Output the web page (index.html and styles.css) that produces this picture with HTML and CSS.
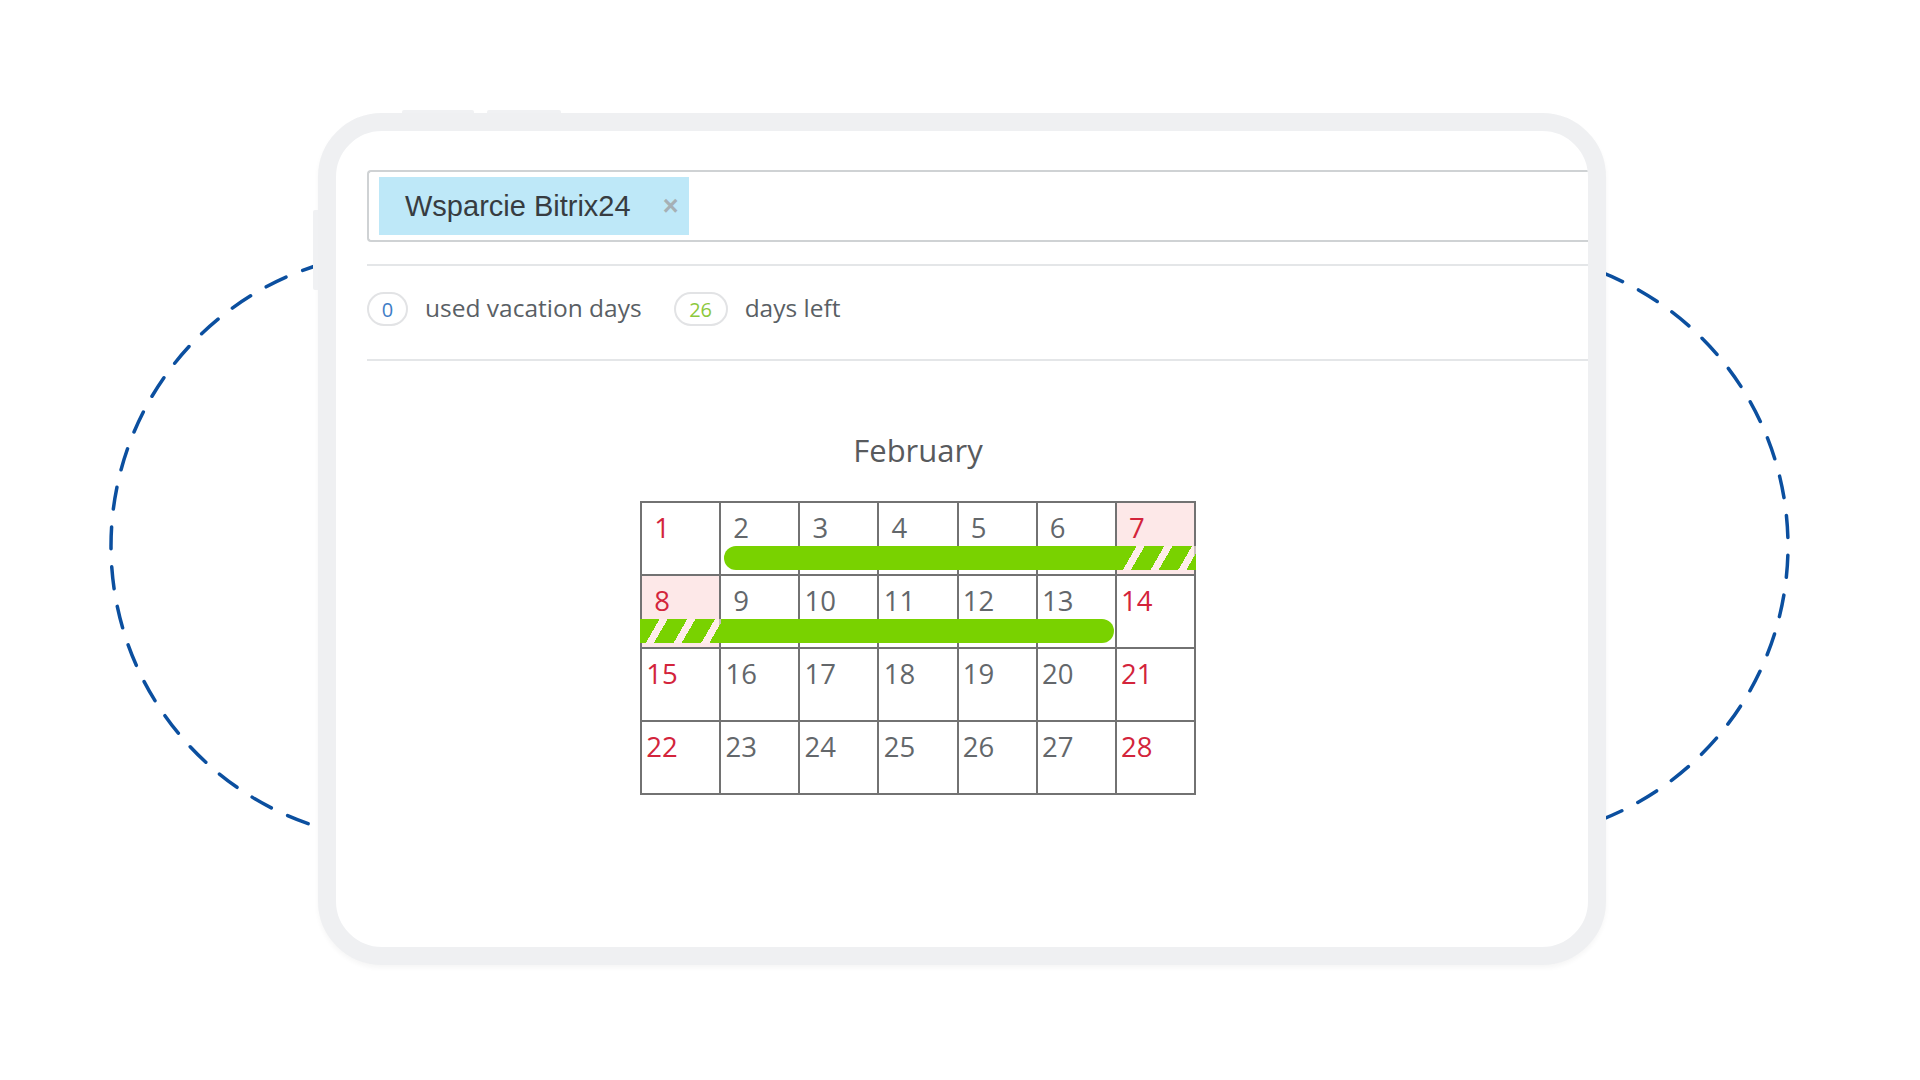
FILE: index.html
```html
<!DOCTYPE html>
<html lang="en">
<head>
<meta charset="utf-8">
<title>Vacation calendar</title>
<link rel="stylesheet" href="styles.css">
</head>
<body>
<div class="stage">
  <svg class="orbit" width="1920" height="1080" viewBox="0 0 1920 1080" aria-hidden="true">
    <rect x="111" y="252" width="1677" height="588" rx="294" ry="294" fill="none" stroke="#0b4f9f" stroke-width="3.5" stroke-linecap="round" stroke-dasharray="22 18"/>
  </svg>
  <div class="device">
    <span class="hw hw-side"></span>
    <span class="hw hw-top1"></span>
    <span class="hw hw-top2"></span>
    <div class="screen">
      <div class="field">
        <span class="tag">Wsparcie Bitrix24<span class="tag-x">×</span></span>
      </div>
      <div class="sep"></div>
      <div class="stats">
        <span class="pill pill-blue">0</span>
        <span class="stat-label">used vacation days</span>
        <span class="pill pill-green">26</span>
        <span class="stat-label">days left</span>
      </div>
      <div class="sep sep-2"></div>
      <div class="calendar">
        <div class="month">February</div>
        <div class="grid-wrap">
          <div class="grid">
            <div class="cell we"><span class="num">1</span></div>
            <div class="cell"><span class="num">2</span></div>
            <div class="cell"><span class="num">3</span></div>
            <div class="cell"><span class="num">4</span></div>
            <div class="cell"><span class="num">5</span></div>
            <div class="cell"><span class="num">6</span></div>
            <div class="cell we off"><span class="num">7</span></div>
            <div class="cell we off"><span class="num">8</span></div>
            <div class="cell"><span class="num">9</span></div>
            <div class="cell"><span class="num">10</span></div>
            <div class="cell"><span class="num">11</span></div>
            <div class="cell"><span class="num">12</span></div>
            <div class="cell"><span class="num">13</span></div>
            <div class="cell we"><span class="num">14</span></div>
            <div class="cell we"><span class="num">15</span></div>
            <div class="cell"><span class="num">16</span></div>
            <div class="cell"><span class="num">17</span></div>
            <div class="cell"><span class="num">18</span></div>
            <div class="cell"><span class="num">19</span></div>
            <div class="cell"><span class="num">20</span></div>
            <div class="cell we"><span class="num">21</span></div>
            <div class="cell we"><span class="num">22</span></div>
            <div class="cell"><span class="num">23</span></div>
            <div class="cell"><span class="num">24</span></div>
            <div class="cell"><span class="num">25</span></div>
            <div class="cell"><span class="num">26</span></div>
            <div class="cell"><span class="num">27</span></div>
            <div class="cell we"><span class="num">28</span></div>
          </div>
          <div class="bar bar-1"></div>
          <div class="hatch hatch-1"></div>
          <div class="hatch hatch-2"></div>
          <div class="bar bar-2"></div>
        </div>
      </div>
    </div>
  </div>
</div>
</body>
</html>
```

FILE: styles.css
```css
* { box-sizing: border-box; }

html, body {
  margin: 0;
  padding: 0;
  background: #ffffff;
}

.stage {
  position: relative;
  width: 1920px;
  height: 1080px;
  padding: 113px 0 0 318px;
  overflow: hidden;
  font-family: "Open Sans", "Liberation Sans", sans-serif;
}

.orbit {
  position: absolute;
  left: 0;
  top: 0;
}

.device {
  position: relative;
  width: 1288px;
  height: 852px;
  border: 18px solid #eff0f2;
  border-radius: 64px;
  background: #ffffff;
  box-shadow: 0 3px 5px rgba(0, 0, 0, 0.04);
}

.hw {
  position: absolute;
  background: #f0f1f3;
}

.hw-side {
  left: -23px;
  top: 79px;
  width: 5px;
  height: 80px;
  border-radius: 2px 0 0 2px;
}

.hw-top1 {
  top: -21px;
  left: 66px;
  width: 72px;
  height: 3px;
  border-radius: 2px 2px 0 0;
}

.hw-top2 {
  top: -21px;
  left: 151px;
  width: 74px;
  height: 3px;
  border-radius: 2px 2px 0 0;
}

.screen {
  height: 100%;
  border-radius: 46px;
  overflow: hidden;
  padding: 39px 0 0 31px;
}

.field {
  height: 72px;
  border: 2px solid #cfd2d4;
  border-right: none;
  border-radius: 4px 0 0 4px;
  padding: 5px 0 5px 10px;
  display: flex;
  align-items: stretch;
}

.tag {
  display: inline-flex;
  align-items: center;
  padding: 0 11px 0 26px;
  background: #bee8f8;
  font-family: "Liberation Sans", Arial, sans-serif;
  font-size: 29px;
  color: #373c41;
}

.tag-x {
  margin-left: 32px;
  font-size: 27px;
  font-weight: bold;
  color: #a6b0b5;
  line-height: 1;
}

.sep {
  height: 2px;
  background: #e4e6e8;
  margin-top: 22px;
}

.sep-2 {
  margin-top: 33px;
}

.stats {
  display: flex;
  align-items: center;
  height: 34px;
  margin-top: 26px;
}

.pill {
  display: inline-flex;
  align-items: center;
  justify-content: center;
  height: 34px;
  border: 2px solid #e2e3e5;
  border-radius: 17px;
  font-size: 20px;
  background: #ffffff;
}

.pill-blue {
  width: 41px;
  color: #3f7dc6;
}

.pill-green {
  width: 54px;
  color: #8cc83c;
}

.stat-label {
  font-size: 24.5px;
  line-height: 30px;
  padding-bottom: 2px;
  color: #5a5f65;
  margin: 0 32px 0 17px;
}

.calendar {
  margin-left: 273px;
  width: 556px;
}

.month {
  margin-top: 69px;
  height: 40px;
  line-height: 40px;
  text-align: center;
  font-size: 31px;
  color: #585a5d;
}

.grid-wrap {
  position: relative;
  margin-top: 31px;
  width: 556px;
}

.grid {
  display: grid;
  grid-template-columns: repeat(7, 1fr);
  grid-auto-rows: 71px;
  gap: 2px;
  padding: 2px;
  background: #727272;
}

.cell {
  background: #ffffff;
  padding: 11px 0 0 0;
  font-size: 27.5px;
  line-height: 28px;
  color: #63676b;
}

.num {
  display: block;
  width: 40px;
  text-align: center;
}

.cell.we {
  color: #d3243b;
}

.cell.off {
  background: #fde8e8;
}

.bar,
.hatch {
  position: absolute;
  height: 24px;
}

.bar {
  background: #79d200;
}

.bar-1 {
  left: 84px;
  width: 393px;
  top: 45px;
  border-radius: 12px 0 0 12px;
}

.hatch-1 {
  left: 477px;
  width: 79px;
  top: 45px;
}

.hatch-2 {
  left: 0;
  width: 81px;
  top: 118px;
}

.bar-2 {
  left: 81px;
  width: 393px;
  top: 118px;
  border-radius: 0 12px 12px 0;
}

.hatch {
  background: repeating-linear-gradient(
    120deg,
    #79d200 0,
    #79d200 17px,
    rgba(255, 240, 235, 0.6) 17px,
    rgba(255, 240, 235, 0.6) 24px
  );
}
```
